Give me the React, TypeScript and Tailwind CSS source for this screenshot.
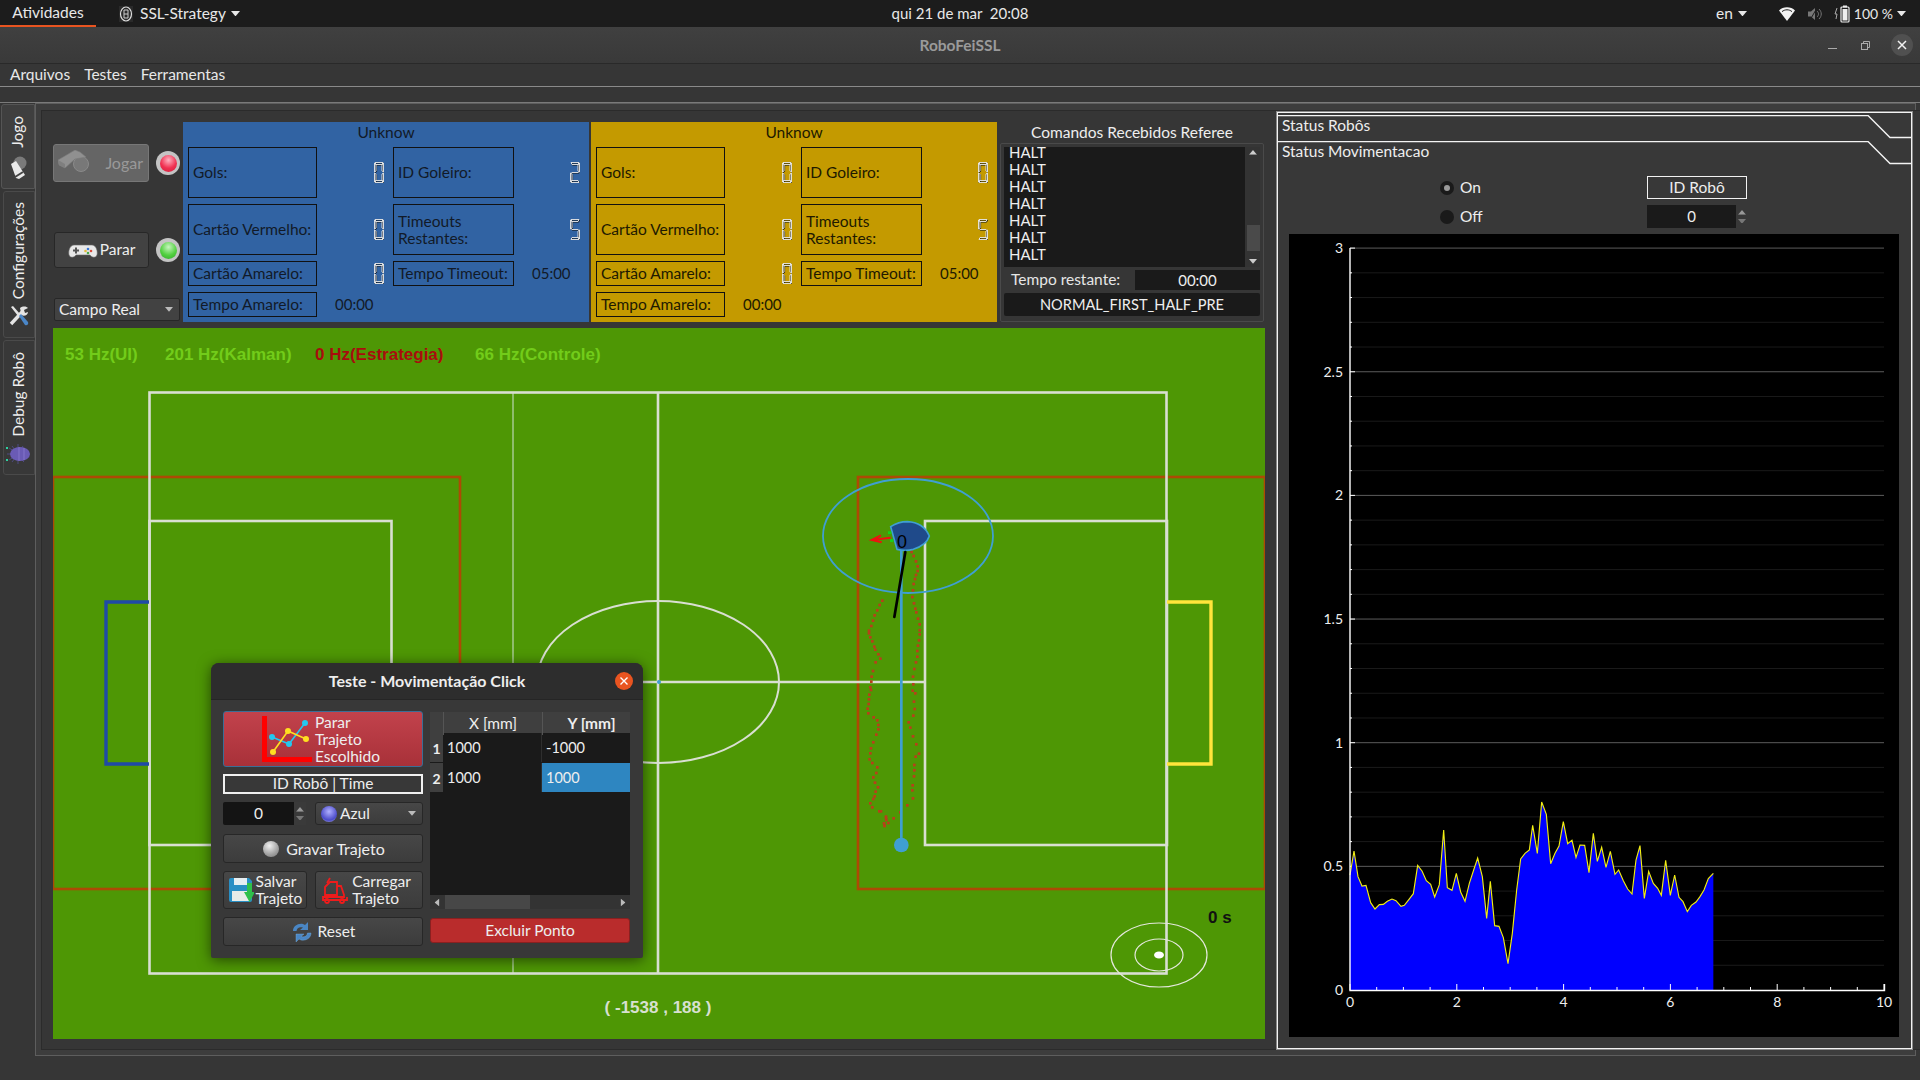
import { ReactNode } from 'react'

const SEGMENTS: Record<string, string> = { '0': 'abcdef', '2': 'abged', '5': 'afgcd' }

// hollow seven segment digit, as the Qt QLCDNumber outline style draws it
function Lcd({ value }: { value: string }) {
  const on = SEGMENTS[value]
  const seg: Record<string, string> = {
    a: 'M1 0.5H9L8 2.5H2Z',
    b: 'M9.5 1V10L8 9V3Z',
    c: 'M9.5 11V20L8 18V12Z',
    d: 'M1 20.5H9L8 18.5H2Z',
    e: 'M0.5 11V20L2 18V12Z',
    f: 'M0.5 1V10L2 9V3Z',
    g: 'M1.5 10.5H8.5',
  }
  return (
    <svg width="10" height="21" viewBox="0 0 10 21" fill="none" strokeWidth="0.9">
      {on.split('').map((s) => (
        <path key={s} d={seg[s]} stroke="#16181c" transform="translate(0.6 0.6)" />
      ))}
      {on.split('').map((s) => (
        <path key={s} d={seg[s]} stroke="#ececec" />
      ))}
    </svg>
  )
}

function Caret({ className = 'fill-[#e6e6e6]', size = 10 }: { className?: string; size?: number }) {
  return (
    <svg width={size} height={size * 0.6} viewBox="0 0 10 6" className={className}>
      <path d="M0 0H10L5 6Z" />
    </svg>
  )
}

function ScoreBox({ children, className = '' }: { children: ReactNode; className?: string }) {
  return <div className={`border border-[#111] flex items-center pl-[4px] leading-[17px] ${className}`}>{children}</div>
}

function LcdCell({ value }: { value: string }) {
  return (
    <div className="flex items-center justify-end pr-[9px]">
      <Lcd value={value} />
    </div>
  )
}

function TeamPanel({ bg, goalie, text }: { bg: string; goalie: string; text: string }) {
  return (
    <div className={`w-[406px] h-[200px] text-[15.5px] ${bg} ${text}`}>
      <div className="h-[25px] flex items-center justify-center pb-[4px]">Unknow</div>
      <div className="grid grid-cols-[129px_76px_121px_75px] grid-rows-[51px_51px_25px_25px] gap-y-[6px] pl-[5px]">
        <ScoreBox>Gols:</ScoreBox>
        <LcdCell value="0" />
        <ScoreBox>ID Goleiro:</ScoreBox>
        <LcdCell value={goalie} />
        <ScoreBox>Cartão Vermelho:</ScoreBox>
        <LcdCell value="0" />
        <ScoreBox>
          Timeouts
          <br />
          Restantes:
        </ScoreBox>
        <LcdCell value="5" />
        <ScoreBox>Cartão Amarelo:</ScoreBox>
        <LcdCell value="0" />
        <ScoreBox>Tempo Timeout:</ScoreBox>
        <div className="flex items-center pl-[18px] text-[15px]">05:00</div>
        <ScoreBox>Tempo Amarelo:</ScoreBox>
        <div className="flex items-center pl-[18px] text-[15px]">00:00</div>
      </div>
    </div>
  )
}

function Led({ color }: { color: 'red' | 'green' }) {
  const fill =
    color === 'red'
      ? 'bg-[radial-gradient(circle_at_50%_30%,#ffb0c0_0%,#f03050_55%,#d0203c_100%)]'
      : 'bg-[radial-gradient(circle_at_50%_30%,#c8f5c0_0%,#52d040_55%,#30a828_100%)]'
  return (
    <div className="w-[24px] h-[24px] rounded-full bg-[#c4c4c4] flex items-center justify-center">
      <div className={`w-[17px] h-[17px] rounded-full ${fill}`} />
    </div>
  )
}

function Whistle({ className = '' }: { className?: string }) {
  return (
    <svg width="32" height="26" viewBox="0 0 32 26" className={className}>
      <circle cx="23" cy="14" r="7.5" fill="#787878" stroke="#8a8a8a" />
      <path d="M0 10L17 0L22 2L28 7L17 9L7 18L1 15Z" fill="#909090" stroke="#7a7a7a" strokeWidth="0.6" />
      <path d="M1 15L7 18V14L0 10Z" fill="#7f7f7f" />
    </svg>
  )
}

function Gamepad() {
  return (
    <svg width="30" height="18" viewBox="0 0 30 18">
      <path d="M6 4H24C28 4 30 10 29 14C28 17 24 17 22 14H8C6 17 2 17 1 14C0 10 2 4 6 4Z" fill="#e8e8e8" stroke="#666" strokeWidth="0.6" />
      <path d="M5 9.5H11M8 6.5V12.5" stroke="#555" strokeWidth="2" />
      <circle cx="20" cy="8" r="1.3" fill="#3b78d8" />
      <circle cx="23" cy="10" r="1.3" fill="#d84b3b" />
      <circle cx="20" cy="12" r="1.3" fill="#46a84a" />
      <circle cx="17.5" cy="10" r="1.3" fill="#e2b93b" />
    </svg>
  )
}

function Tools() {
  return (
    <svg width="22" height="22" viewBox="0 0 22 22">
      <path d="M3 19L15 6" stroke="#e4e4e4" strokeWidth="3.4" />
      <path d="M12 3C15 0.5 19 1.5 20 3L16 5L17 8L20 7C20 10 16 12 13.5 10Z" fill="#e4e4e4" />
      <path d="M3 2L5 1L12 9L10 11Z" fill="#e4e4e4" />
      <path d="M11 11L13 9L20 17C21 19 19 21 17 20Z" fill="#4a86c8" />
    </svg>
  )
}

function Bug() {
  return (
    <svg width="26" height="24" viewBox="0 0 26 24">
      <path d="M6 4L9 8M12 2V6M17 4L15 7M6 20L9 16M12 22V18M18 20L15 17M7 12H1M3 6L8 9M3 18L8 15" stroke="#4d4a80" strokeWidth="1" fill="none" />
      <ellipse cx="14" cy="12" rx="10" ry="7" fill="#6a5bb5" />
      <path d="M13 5V19M18 6V18" stroke="#8a7cd0" strokeWidth="0.8" />
      <rect x="0" y="5" width="2" height="2" fill="#30d0a0" />
      <rect x="0" y="17" width="2" height="2" fill="#30d0a0" />
    </svg>
  )
}

function VerticalTab({ label, icon, active, className }: { label: string; icon: ReactNode; active?: boolean; className: string }) {
  return (
    <div
      className={`${className} ${active ? 'w-[34px] ml-px bg-[#3f3f3f] border-[#555]' : 'w-[32px] ml-[3px] bg-[#383838] border-[#4a4a4a]'} border rounded-l-[3px] flex flex-col items-center justify-end`}
    >
      <span className="[writing-mode:vertical-rl] rotate-180 text-[15.5px] text-[#eeeeee] leading-none">{label}</span>
      {icon}
    </div>
  )
}

const HALTS = ['HALT', 'HALT', 'HALT', 'HALT', 'HALT', 'HALT', 'HALT']

function RefereePanel() {
  return (
    <div className="ml-[3px] w-[264px] h-[200px] flex flex-col text-[15.5px] text-[#eeeeee]">
      <div className="h-[21px] flex items-center justify-center">Comandos Recebidos Referee</div>
      <div className="flex-1 border border-[#4a4a4a] rounded-[2px] pt-[3px] px-[3px]">
        <div className="h-[120px] flex bg-[#1a1a1a]">
          <div className="w-[241px] pl-[5px] overflow-hidden leading-[17px] text-[15px]">
            <div className="-mt-[3px]">
              {HALTS.map((h, i) => (
                <div key={i}>{h}</div>
              ))}
            </div>
          </div>
          <div className="flex-1 bg-[#333] flex flex-col items-center py-[3px] pl-px">
            <Caret className="fill-[#cccccc] rotate-180" size={8} />
            <div className="flex-1" />
            <div className="w-[13px] h-[26px] bg-[#4a4a4a] mb-[8px]" />
            <Caret className="fill-[#cccccc]" size={8} />
          </div>
        </div>
        <div className="h-[26px] flex items-center">
          <span className="ml-[7px] w-[124px] text-[#e6e6e6]">Tempo restante:</span>
          <div className="w-[125px] h-[20px] bg-[#1a1a1a] flex items-center justify-center text-[15px]">00:00</div>
        </div>
        <div className="h-[23px] bg-[#1a1a1a] rounded-[2px] flex items-center justify-center text-[14.6px]">NORMAL_FIRST_HALF_PRE</div>
      </div>
    </div>
  )
}

const TRAIL_RIGHT = [
  [323, 237], [326, 255], [335, 276], [341, 288], [348, 304], [353, 319], [353, 333], [348, 345], [345, 357], [341, 372],
  [339, 391], [337, 411], [342, 430], [346, 446], [349, 457], [354, 476], [359, 493], [359, 511], [359, 523], [357, 541],
  [354, 557], [352, 573], [352, 590], [348, 607], [343, 627], [339, 650], [340, 673], [338, 692], [346, 700], [342, 725],
  [344, 747], [340, 767], [326, 787], [331, 803], [339, 829], [349, 853], [357, 881], [347, 890], [343, 915], [343, 931],
  [342, 949], [338, 976], [337, 991], [339, 1015], [322, 1036], [301, 1057], [281, 1075], [265, 1089], [258, 1070], [259, 1080], [254, 1097],
]

const TRAIL_LEFT = [
  [247, 422], [239, 435], [232, 451], [224, 466], [219, 482], [214, 498], [207, 512], [207, 520], [211, 532], [217, 544],
  [223, 560], [226, 569], [235, 583], [241, 596], [227, 607], [219, 633], [215, 650], [214, 665], [211, 682], [213, 690],
  [208, 704], [207, 718], [206, 732], [203, 746], [205, 760], [221, 772], [232, 781], [235, 795], [235, 808], [229, 824],
  [220, 847], [213, 865], [211, 880], [209, 898], [217, 909], [232, 922], [229, 939], [220, 952], [225, 968], [234, 982],
  [227, 995], [224, 1009], [220, 1017], [211, 1030], [217, 1042], [238, 1054], [243, 1054], [258, 1075], [252, 1090], [254, 1098],
]

function FieldDrawing() {
  const line = '#d9dfd2'
  const box = '#ad4a05'
  const robot = '#3f9fd2'
  return (
    <svg className="absolute inset-0" width="1212" height="711" viewBox="53 328 1212 711" fill="none">
      <rect x="53" y="477" width="407" height="412" stroke={box} strokeWidth="2.6" />
      <rect x="858" y="477" width="407" height="412" stroke={box} strokeWidth="2.6" />
      <path d="M513 392V974" stroke="#8fbd6c" strokeWidth="2" />
      <rect x="149.5" y="392.5" width="1017" height="581" stroke={line} strokeWidth="2.6" />
      <path d="M658 392V974M391 682H925" stroke={line} strokeWidth="2.6" />
      <ellipse cx="658" cy="682" rx="121" ry="81" stroke={line} strokeWidth="2" />
      <rect x="149.5" y="521" width="242" height="324" stroke={line} strokeWidth="2.6" />
      <rect x="925" y="521" width="242" height="324" stroke={line} strokeWidth="2.6" />
      <path d="M149 602H106V764H149" stroke="#1f4aa8" strokeWidth="3.4" />
      <path d="M1167 602H1211V764H1167" stroke="#ffe53b" strokeWidth="3.4" />
      <circle cx="659" cy="682" r="2" fill={robot} />
      <ellipse cx="908" cy="536" rx="85" ry="57" stroke={robot} strokeWidth="1.8" />
      <g transform="translate(800 460) scale(0.33333)">
        {[...TRAIL_RIGHT, ...TRAIL_LEFT].map(([x, y], i) => (
          <rect key={i} x={x - 4} y={y - 4} width="8" height="8" fill="#b8401a" />
        ))}
        <path d="M304 260V1155" stroke={robot} strokeWidth="8" />
        <circle cx="304" cy="1155" r="22" fill={robot} />
        <path d="M272 200Q295 185 322 185Q370 187 388 228Q380 255 340 268Q315 274 291 268Z" fill="#1f4a8a" stroke={robot} strokeWidth="5" />
        <path d="M316 276L283 471" stroke="#000" strokeWidth="8" strokeLinecap="round" />
        <path d="M264 218H274M270 242H280" stroke="#18d018" strokeWidth="8" />
        <path d="M272 233L215 240M243 226L215 240L245 247" stroke="#f01010" strokeWidth="6" />
      </g>
      <text x="902" y="548" textAnchor="middle" className="font-['Liberation_Sans'] text-[18px] fill-black">0</text>
      <ellipse cx="1159" cy="955" rx="48" ry="32" stroke="#e4e8dc" strokeWidth="1.2" />
      <ellipse cx="1159" cy="955" rx="24" ry="16" stroke="#e4e8dc" strokeWidth="1.2" />
      <ellipse cx="1159" cy="955" rx="5" ry="3.5" fill="#fff" />
      <g className="font-['Liberation_Sans'] font-bold text-[17px]">
        <text x="65" y="360" fill="#72cc1a">53 Hz(UI)</text>
        <text x="165" y="360" fill="#72cc1a">201 Hz(Kalman)</text>
        <text x="315" y="360" fill="#a80d0d">0 Hz(Estrategia)</text>
        <text x="475" y="360" fill="#72cc1a">66 Hz(Controle)</text>
        <text x="1208" y="923" fill="#111">0 s</text>
        <text x="658" y="1013" textAnchor="middle" fill="#d8e0d0">( -1538 , 188 )</text>
      </g>
    </svg>
  )
}

function TrajectoryIcon() {
  return (
    <svg width="50" height="46" viewBox="0 0 50 46">
      <path d="M2.5 0V43.5H50" stroke="#ff0000" strokeWidth="5" fill="none" />
      <path d="M10 21L27 28L43 7" stroke="#25c8f0" strokeWidth="1.6" fill="none" />
      <path d="M11 36L26 15L44 23" stroke="#ffe020" strokeWidth="1.6" fill="none" />
      <circle cx="10" cy="21" r="3" fill="#25c8f0" />
      <circle cx="27" cy="28" r="3" fill="#25c8f0" />
      <circle cx="43" cy="7" r="3" fill="#25c8f0" />
      <circle cx="11" cy="36" r="3" fill="#ffe020" />
      <circle cx="26" cy="15" r="3" fill="#ffe020" />
      <circle cx="44" cy="23" r="3" fill="#ffe020" />
    </svg>
  )
}

function Floppy() {
  return (
    <svg width="26" height="26" viewBox="0 0 26 26">
      <path d="M1 3Q1 1 3 1H21L24 4V23Q24 25 22 25H3Q1 25 1 23Z" fill="#2a8fc4" />
      <rect x="6" y="1" width="13" height="7" fill="#e6eef2" />
      <rect x="4" y="14" width="17" height="10" fill="#e8ece8" />
      <path d="M19 6H24V15H27L21.5 25L16 15H19Z" fill="#2ec04a" />
    </svg>
  )
}

function Truck() {
  return (
    <svg width="26" height="27" viewBox="0 0 26 27" fill="none" stroke="#ee1c1c" strokeWidth="1.8">
      <path d="M3 10L8 5H15V18H3Z" />
      <path d="M8 1L5 6" />
      <path d="M15 9H19L22 18V20H1V23H25V20" />
      <circle cx="5" cy="24" r="2" />
      <circle cx="20" cy="24" r="2" />
    </svg>
  )
}

function Refresh() {
  return (
    <svg width="22" height="22" viewBox="0 0 22 22" fill="#4a86c4">
      <path d="M2 10C2 5 7 2 12 3L14 4L17 1V9H9L12 6.5C8 5.5 6 7 5.5 10Z" />
      <path d="M20 12C20 17 15 20 10 19L8 18L5 21V13H13L10 15.5C14 16.5 16 15 16.5 12Z" stroke="#7ab0e0" strokeWidth="0.4" />
    </svg>
  )
}

function DialogButton({ children, className = '' }: { children: ReactNode; className?: string }) {
  return (
    <div className={`border border-[#272727] rounded-[3px] bg-[linear-gradient(#474747,#3c3c3c)] flex items-center justify-center text-[#eeeeee] ${className}`}>
      {children}
    </div>
  )
}

function SpinArrows() {
  return (
    <div className="flex flex-col gap-[4px] items-center">
      <Caret className="fill-[#999999] rotate-180" size={8} />
      <Caret className="fill-[#777777]" size={8} />
    </div>
  )
}

function MoveDialog() {
  return (
    <div className="absolute left-[158px] top-[335px] w-[432px] h-[295px] rounded-t-[8px] rounded-b-[2px] bg-[#383838] shadow-[0_2px_14px_rgba(0,0,0,0.55)] text-[15.5px] overflow-hidden">
      <div className="relative h-[37px] bg-[#2d2d2d] border-b border-[#252525] flex items-center justify-center font-bold text-[16px] text-[#eeeeee]">
        Teste - Movimentação Click
        <div className="absolute right-[10px] top-[9px] w-[18px] h-[18px] rounded-full bg-[#e95420] flex items-center justify-center">
          <svg width="8" height="8" viewBox="0 0 8 8" stroke="#fff" strokeWidth="1.4">
            <path d="M0.5 0.5L7.5 7.5M7.5 0.5L0.5 7.5" />
          </svg>
        </div>
      </div>
      <div className="flex pl-[12px] pt-[11px] gap-[7px]">
        <div className="w-[200px] flex flex-col">
          <div className="h-[56px] border border-[#3a6e96] rounded-[3px] bg-[linear-gradient(#c2424c,#a83139)] flex items-center justify-center gap-[3px] pr-[4px] text-[#eeeeee] leading-[17px]">
            <TrajectoryIcon />
            <div>
              Parar
              <br />
              Trajeto
              <br />
              Escolhido
            </div>
          </div>
          <div className="h-[20px] mt-[7px] border-2 border-[#f0f0f0] flex items-center justify-center text-[#eeeeee]">ID Robô | Time</div>
          <div className="flex mt-[8px] h-[23px] gap-[9px]">
            <div className="w-[83px] bg-[#141414] rounded-[2px] flex items-center">
              <span className="w-[71px] text-center text-[#eeeeee]">0</span>
              <div className="flex-1 h-full bg-[#3a3a3a] flex items-center justify-center">
                <SpinArrows />
              </div>
            </div>
            <DialogButton className="flex-1 justify-start pl-[5px] gap-[3px]">
              <span className="w-[16px] h-[16px] rounded-full bg-[radial-gradient(circle_at_50%_35%,#b0b0ff_0%,#4a4ac8_65%,#c0c0e0_100%)]" />
              Azul
              <Caret className="fill-[#bbbbbb] ml-auto mr-[6px]" size={8} />
            </DialogButton>
          </div>
          <DialogButton className="h-[29px] mt-[9px] gap-[7px] pl-[2px] text-[16px]">
            <span className="w-[16px] h-[16px] rounded-full bg-[radial-gradient(circle_at_40%_30%,#f0f0f0_0%,#a0a0a0_60%,#777_100%)]" />
            Gravar Trajeto
          </DialogButton>
          <div className="flex mt-[8px] h-[38px] gap-[8px]">
            <DialogButton className="w-[84px] gap-[2px] leading-[17px]">
              <Floppy />
              <div>
                Salvar
                <br />
                Trajeto
              </div>
            </DialogButton>
            <DialogButton className="flex-1 gap-[4px] pr-[5px] leading-[17px]">
              <Truck />
              <div>
                Carregar
                <br />
                Trajeto
              </div>
            </DialogButton>
          </div>
          <DialogButton className="h-[29px] mt-[8px] gap-[5px]">
            <Refresh />
            Reset
          </DialogButton>
        </div>
        <div className="w-[200px] flex flex-col pt-px">
          <div className="h-[197px] bg-[#1a1a1a] flex flex-col text-[#eeeeee]">
            <div className="grid grid-cols-[13px_99px_88px] h-[21px] bg-[#3f3f3f]">
              <div />
              <div className="flex items-center justify-center border-l border-[#555]">X [mm]</div>
              <div className="flex items-center justify-center border-l border-[#555] pl-[10px] font-bold">Y [mm]</div>
            </div>
            <div className="grid grid-cols-[13px_99px_88px] grid-rows-[29px_29px] gap-y-px text-[14.5px]">
              <div className="bg-[#3f3f3f] flex items-center justify-center font-bold text-[14px] pt-[2px]">1</div>
              <div className="flex items-center pl-[4px] border-r border-[#2e2e2e]">1000</div>
              <div className="flex items-center pl-[4px]">-1000</div>
              <div className="bg-[#3f3f3f] flex items-center justify-center font-bold text-[14px] pt-[2px]">2</div>
              <div className="flex items-center pl-[4px] border-r border-[#2e2e2e]">1000</div>
              <div className="flex items-center pl-[4px] bg-[#2e86c1]">1000</div>
            </div>
            <div className="flex-1" />
            <div className="h-[14px] bg-[#333] flex items-center justify-between px-[3px] gap-[4px]">
              <Caret className="fill-[#bbbbbb] rotate-90" size={8} />
              <div className="h-full w-[85px] bg-[#474747] mr-auto" />
              <Caret className="fill-[#bbbbbb] -rotate-90" size={8} />
            </div>
          </div>
          <div className="h-[25px] mt-[9px] border border-[#8a2020] rounded-[3px] bg-[#b92c2c] flex items-center justify-center text-[#eeeeee]">Excluir Ponto</div>
        </div>
      </div>
    </div>
  )
}

const SPEED = [
  [60, 345], [72, 273], [84, 350], [96, 378], [108, 376], [122, 428], [135, 447], [148, 434], [160, 433], [172, 424],
  [186, 417], [198, 422], [213, 439], [223, 436], [237, 418], [250, 401], [263, 316], [276, 333], [289, 362], [302, 373],
  [314, 411], [328, 374], [341, 210], [352, 383], [366, 391], [379, 340], [392, 396], [405, 424], [418, 370], [431, 330],
  [443, 294], [457, 350], [470, 475], [481, 364], [494, 497], [507, 499], [520, 533], [534, 611], [547, 520], [560, 390],
  [572, 297], [585, 280], [598, 270], [608, 196], [622, 280], [635, 126], [649, 163], [662, 311], [675, 280], [687, 258],
  [700, 185], [713, 251], [726, 241], [738, 292], [750, 255], [764, 256], [777, 338], [790, 220], [802, 304], [815, 262],
  [828, 322], [841, 274], [855, 343], [866, 330], [880, 362], [893, 387], [906, 402], [918, 300], [930, 257], [943, 415],
  [956, 334], [970, 370], [983, 385], [994, 406], [1007, 301], [1021, 406], [1034, 345], [1047, 412], [1059, 425], [1072, 455],
  [1084, 436], [1098, 426], [1110, 410], [1122, 390], [1135, 356], [1150, 340],
]

function SpeedChart() {
  const x0 = 1350
  const y0 = 990
  const ux = 53.4
  const uy = 247.3
  const points = SPEED.map(([x, y]) => `${x},${y}`).join(' ')
  const gridY = Array.from({ length: 30 }, (_, i) => i + 1)
  const ticksX = Array.from({ length: 21 }, (_, i) => i)
  return (
    <svg width="610" height="803" viewBox="1289 234 610 803" className="block">
      {gridY.map((i) => {
        const y = y0 - (i / 10) * uy
        const major = i % 5 === 0
        return (
          <g key={i}>
            <path d={`M${x0} ${y}H1884`} stroke={major ? '#5c5c5c' : '#1a1a1a'} strokeWidth="1" />
            <path d={`M${x0} ${y}H${x0 + (major ? 5 : 2)}`} stroke="#fff" strokeWidth="1" />
          </g>
        )
      })}
      <g transform="translate(1330 760) scale(0.33333)">
        <polygon points={`60,690 ${points} 1150,690`} fill="#0000ff" />
        <polyline points={points} fill="none" stroke="#f2ee10" strokeWidth="3.4" />
      </g>
      <path d={`M${x0} 248V${y0 + 0.5}H1884.5V${y0 - 6}`} fill="none" stroke="#fff" strokeWidth="1.4" />
      {ticksX.map((i) => {
        const x = x0 + (i / 2) * ux
        return <path key={i} d={`M${x} ${y0}V${y0 - (i % 4 === 0 ? 6 : 3)}`} stroke="#fff" strokeWidth="1" />
      })}
      <g className="text-[14px] fill-[#eeeeee] font-['Lato','Liberation_Sans',sans-serif]">
        {['0', '0.5', '1', '1.5', '2', '2.5', '3'].map((t, i) => (
          <text key={t} x="1343" y={y0 - (i / 2) * uy + 5} textAnchor="end">
            {t}
          </text>
        ))}
        {['0', '2', '4', '6', '8', '10'].map((t, i) => (
          <text key={t} x={x0 + i * 2 * ux} y="1007" textAnchor="middle">
            {t}
          </text>
        ))}
      </g>
    </svg>
  )
}

function ToolboxHeader({ label }: { label: string }) {
  return (
    <div className="relative h-[26px] flex items-center pl-[4px] pb-[4px] text-[15.5px] text-[#eeeeee]">
      {label}
      <svg className="absolute left-0 top-0" width="633" height="24" viewBox="0 0 633 24" fill="none">
        <path d="M0 0.5H590L612 22.5H633" stroke="#f4f4f4" strokeWidth="1.4" />
      </svg>
    </div>
  )
}

function Radio({ on, label }: { on?: boolean; label: string }) {
  return (
    <div className="flex items-center gap-[6px] text-[15.5px] text-[#eeeeee]">
      <div className="w-[14px] h-[14px] rounded-full bg-[#1a1a1a] flex items-center justify-center">
        {on && <div className="w-[6px] h-[6px] rounded-full bg-[#9a9a9a]" />}
      </div>
      {label}
    </div>
  )
}

function StatusPanel() {
  return (
    <div className="w-[635px] h-[937px] mt-px border border-[#f2f2f2] ring-1 ring-[#8a8a8a] bg-[#383838] pt-[2px]">
      <ToolboxHeader label="Status Robôs" />
      <ToolboxHeader label="Status Movimentacao" />
      <div className="grid grid-cols-[207px_100px] grid-rows-[23px_23px] gap-y-[6px] pl-[162px] pt-[9px] items-center">
        <Radio on label="On" />
        <div className="h-[23px] border border-[#f2f2f2] flex items-center justify-center text-[15.5px] text-[#eeeeee]">ID Robô</div>
        <Radio label="Off" />
        <div className="flex h-[23px]">
          <div className="w-[89px] bg-[#1a1a1a] flex items-center justify-center text-[15px] text-[#eeeeee]">0</div>
          <div className="flex-1 flex items-center justify-center">
            <SpinArrows />
          </div>
        </div>
      </div>
      <div className="mt-[6px] ml-[11px] w-[610px] h-[803px] bg-black">
        <SpeedChart />
      </div>
    </div>
  )
}

function TopBar() {
  return (
    <div className="relative h-[27px] bg-[#1c1c1c] flex items-center text-[15.5px] text-[#e8e8e8]">
      <div className="h-full w-[96px] border-b-2 border-[#e95420] flex items-center justify-center">Atividades</div>
      <svg width="14" height="16" viewBox="0 0 14 16" className="ml-[23px] mr-[7px]">
        <rect width="14" height="16" fill="#2a2a2a" />
        <ellipse cx="7" cy="8" rx="5.5" ry="7" fill="none" stroke="#ddd" strokeWidth="1.2" />
        <path d="M5 4H9V12H5ZM5 8H9" stroke="#ccc" fill="none" />
      </svg>
      <span>SSL-Strategy</span>
      <Caret className="fill-[#e8e8e8] ml-[5px]" size={9} />
      <span className="absolute left-0 right-0 text-center text-[15px]">qui 21 de mar&nbsp; 20:08</span>
      <div className="ml-auto flex items-center">
        <span>en</span>
        <Caret className="fill-[#e8e8e8] ml-[5px] mr-[32px]" size={9} />
        <svg width="16" height="14" viewBox="0 0 16 14" className="mr-[13px]">
          <path d="M0 3.5C4 -0.8 12 -0.8 16 3.5L8 14Z" fill="#f2f2f2" />
          <path d="M3 4.6C6 2.2 10 2.2 13 4.6" stroke="#1c1c1c" fill="none" />
        </svg>
        <svg width="15" height="14" viewBox="0 0 15 14" className="mr-[11px]">
          <path d="M0 4.5H3L7 1V13L3 9.5H0Z" fill="#777" />
          <path d="M9 4C11 6 11 8 9 10M11 2C14 5 14 9 11 12" stroke="#777" fill="none" />
          <path d="M2 13L9 1" stroke="#1c1c1c" strokeWidth="1" />
        </svg>
        <svg width="16" height="18" viewBox="0 0 16 18" className="mr-[4px]">
          <path d="M3 3L1 9H3L2 14" stroke="#aaa" fill="none" />
          <rect x="7" y="2" width="8" height="15" rx="1" fill="none" stroke="#eee" strokeWidth="1.2" />
          <rect x="9" y="0.5" width="4" height="2" fill="#eee" />
          <rect x="8.5" y="4" width="5" height="11.5" fill="#eee" />
        </svg>
        <span className="text-[14px]">100 %</span>
        <Caret className="fill-[#e8e8e8] ml-[4px] mr-[14px]" size={9} />
      </div>
    </div>
  )
}

function TitleBar() {
  return (
    <div className="relative h-[37px] pt-px bg-[linear-gradient(#404040,#393939)] border-b border-[#292929] flex items-center justify-center font-bold text-[15.5px] text-[#9a9a9a]">
      RoboFeiSSL
      <div className="absolute right-[7px] top-[7px] flex items-center">
        <div className="w-[9px] h-px bg-[#aaaaaa] mt-[7px] mr-[24px]" />
        <svg width="9" height="9" viewBox="0 0 9 9" fill="none" stroke="#aaa" className="mr-[21px]">
          <rect x="0.5" y="2.5" width="6" height="6" />
          <path d="M2.5 2.5V0.5H8.5V6.5H6.5" />
        </svg>
        <div className="w-[22px] h-[22px] rounded-full bg-[#505050] flex items-center justify-center">
          <svg width="10" height="10" viewBox="0 0 10 10" stroke="#f2f2f2" strokeWidth="1.5">
            <path d="M1 1L9 9M9 1L1 9" />
          </svg>
        </div>
      </div>
    </div>
  )
}

export default function App() {
  return (
    <div className="w-[1920px] h-[1080px] bg-[#363636] overflow-hidden flex flex-col font-['Lato','Noto_Sans',sans-serif]">
      <TopBar />
      <TitleBar />
      <div className="h-[22px] border-b border-[#8a8a8a] box-content flex items-center gap-[14px] pl-[10px] text-[15.5px] text-[#e8e8e8]">
        <span>Arquivos</span>
        <span>Testes</span>
        <span>Ferramentas</span>
      </div>
      <div className="h-[15px] border-b border-[#7a7a7a] box-content" />
      <div className="flex">
        <div className="w-[35px] pt-px flex flex-col gap-[2px]">
          <VerticalTab
            active
            label="Jogo"
            className="h-[85px] pb-[8px] gap-[8px]"
            icon={
              <svg width="18" height="24" viewBox="0 0 18 24">
                <circle cx="11" cy="7" r="6.5" fill="#7a7a7a" />
                <path d="M2 8L7 5L16 19L10 23L7 22Z" fill="#eaeaea" />
                <path d="M6 21L14 16" stroke="#444" strokeWidth="2" />
              </svg>
            }
          />
          <VerticalTab label="Configurações" className="h-[147px] pb-[10px] gap-[6px]" icon={<Tools />} />
          <VerticalTab label="Debug Robô" className="h-[135px] pb-[8px] gap-[5px]" icon={<Bug />} />
        </div>
        <div className="w-[1881px] h-[953px] border border-[#5e5e5e] bg-[#3d3d3d] pl-[5px] pt-[6px]">
          <div className="h-[940px] w-[1880px] border border-[#2b2b2b] bg-[#363636] flex">
            <div className="w-[1235px] pl-[11px] pt-[11px]">
              <div className="flex">
                <div className="w-[130px] flex flex-col text-[15.5px]">
                  <div className="flex items-center gap-[7px] mt-[22px]">
                    <div className="w-[96px] h-[38px] rounded-[3px] border border-[#777777] bg-[#656565] flex items-center justify-between pl-[4px] pr-[5px] text-[16px] text-[#999999]">
                      <Whistle />
                      Jogar
                    </div>
                    <Led color="red" />
                  </div>
                  <div className="flex items-center gap-[7px] mt-[50px] pl-px">
                    <div className="w-[95px] h-[36px] rounded-[3px] border border-[#272727] bg-[#424242] flex items-center justify-center gap-[2px] text-[#eeeeee]">
                      <Gamepad />
                      Parar
                    </div>
                    <Led color="green" />
                  </div>
                  <div className="ml-px mt-[30px] w-[126px] h-[23px] rounded-[2px] border border-[#272727] bg-[#424242] flex items-center pl-[4px] pr-[6px] text-[#eeeeee]">
                    Campo Real
                    <Caret className="fill-[#bbbbbb] ml-auto" size={8} />
                  </div>
                </div>
                <TeamPanel bg="bg-[#3163a3]" goalie="2" text="text-[#111a28]" />
                <div className="w-[2px]" />
                <TeamPanel bg="bg-[#c49a00]" goalie="0" text="text-[#201900]" />
                <RefereePanel />
              </div>
              <div className="relative mt-[6px] w-[1212px] h-[711px] bg-[#4e9705]">
                <FieldDrawing />
                <MoveDialog />
              </div>
            </div>
            <StatusPanel />
          </div>
        </div>
      </div>
    </div>
  )
}
